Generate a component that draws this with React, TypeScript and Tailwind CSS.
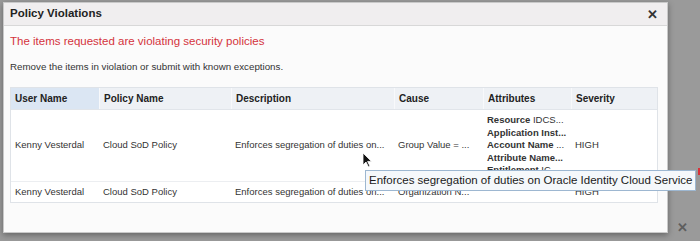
import React from 'react';

const cols = 'grid grid-cols-[88px_132px_163px_89px_88px_88px]';

const headers = ['User Name', 'Policy Name', 'Description', 'Cause', 'Attributes', 'Severity'];

const attributes: [string, string][] = [
  ['Resource', ' IDCS...'],
  ['Application Inst...', ''],
  ['Account Name', ' ...'],
  ['Attribute Name...', ''],
  ['Entitlement', ' IC'],
];

const Cursor = () => (
  <svg width="11" height="16" viewBox="0 0 11 16" className="absolute left-[362px] top-[152px]">
    <path d="M1 1 L1 13 L4 10 L6.5 15 L8 14.3 L5.6 9.4 L9.5 9.4 Z" fill="#111" stroke="#fff" strokeWidth="0.8" />
  </svg>
);

export default function App() {
  return (
    <div className="relative w-[700px] h-[241px] overflow-hidden bg-[#9a9a9a] font-['Liberation_Sans',Arial,sans-serif]">
      <div className="pt-[2px] pl-[3px]">
        <div className="w-[665px] h-[231px] bg-[#fbfbfb] border border-[#c9c9c9] shadow-[0_2px_6px_rgba(0,0,0,0.35)] flex flex-col">
          {/* Title bar */}
          <div className="h-[23px] shrink-0 flex items-center justify-between pl-[6px] pr-[9px] bg-[#f0eeef] border-b border-[#d8d8d8]">
            <span className="text-[11.5px] font-bold text-[#222]">Policy Violations</span>
            <span className="text-[13px] font-bold text-[#333] leading-none">✕</span>
          </div>

          {/* Body */}
          <div className="pl-[6px] pt-[7px]">
            <div className="text-[11.5px] leading-[16px] text-[#d4333b]">
              The items requested are violating security policies
            </div>
            <div className="mt-[11px] text-[9.75px] leading-[14px] text-[#333]">
              Remove the items in violation or submit with known exceptions.
            </div>

            {/* Table */}
            <div className="mt-[13px] w-[648px] border border-[#dfe3e8] bg-white text-[9.5px] text-[#333]">
              <div className={`${cols} h-[22px] bg-[#eef1f5] border-b border-[#e1e5ea]`}>
                {headers.map((h, i) => (
                  <div
                    key={h}
                    className={`flex items-center pl-[4px] font-bold text-[10px] text-[#222] ${
                      i === 0 ? 'bg-[#dbe6f3]' : 'border-l border-[#f8f9fb]'
                    }`}
                  >
                    {h}
                  </div>
                ))}
              </div>

              <div className={`${cols} h-[72px] border-b border-[#eceef1]`}>
                <div className="flex items-center pl-[4px]">Kenny Vesterdal</div>
                <div className="flex items-center pl-[4px]">Cloud SoD Policy</div>
                <div className="flex items-center pl-[4px]">Enforces segregation of duties on...</div>
                <div className="flex items-center pl-[4px]">Group Value = ...</div>
                <div className="flex flex-col justify-center pl-[4px] leading-[12.4px] whitespace-nowrap">
                  {attributes.map(([k, v]) => (
                    <div key={k}>
                      <span className="font-bold">{k}</span>
                      {v}
                    </div>
                  ))}
                </div>
                <div className="flex items-center pl-[4px]">HIGH</div>
              </div>

              <div className={`${cols} h-[20px]`}>
                <div className="flex items-center pl-[4px]">Kenny Vesterdal</div>
                <div className="flex items-center pl-[4px]">Cloud SoD Policy</div>
                <div className="flex items-center pl-[4px]">Enforces segregation of duties on...</div>
                <div className="flex items-center pl-[4px]">Organization N...</div>
                <div />
                <div className="flex items-center pl-[4px]">HIGH</div>
              </div>
            </div>
          </div>
        </div>
      </div>

      {/* Tooltip */}
      <div className="absolute left-[365px] top-[170px] h-[21px] px-[3px] flex items-center bg-[#f5f8fb] border border-[#9db7d1] text-[11.5px] text-[#1a1a1a] whitespace-nowrap">
        Enforces segregation of duties on Oracle Identity Cloud Service
      </div>

      <Cursor />

      <div className="absolute right-0 top-[168px] w-[2px] h-[7px] bg-[#d9323a]" />
      <span className="absolute left-[677px] top-[221px] text-[13px] font-bold text-[#5e5e5e] leading-none">✕</span>
    </div>
  );
}
